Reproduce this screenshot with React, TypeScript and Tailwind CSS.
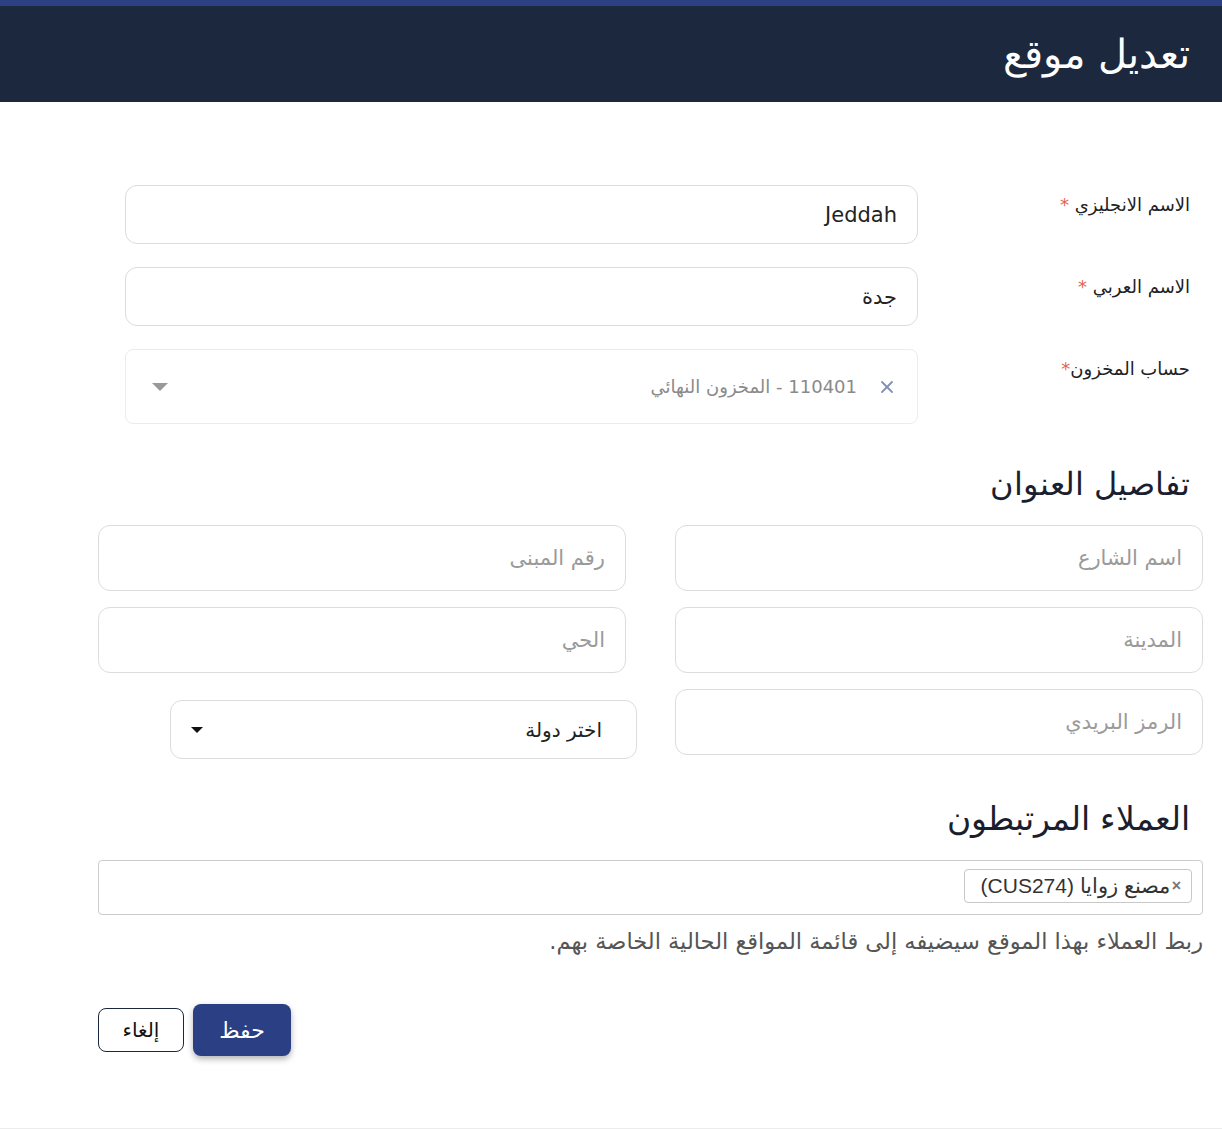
import { X } from "lucide-react";

const inputCls =
  "w-full h-full rounded-xl border border-[#dcdcdc] bg-white px-5 text-[21px] text-[#222] outline-none placeholder:text-[#9a9a9a]";

const Field = ({ label }: { label: string }) => (
  <div className="h-[66px]">
    <input className={inputCls} placeholder={label} />
  </div>
);

const EditLocation = () => {
  return (
    <div dir="rtl" className="min-h-[1129px] bg-white font-['DejaVu_Sans',sans-serif] text-[#222]">
      <div className="h-[6px] bg-[#2c4084]" />
      <header className="flex h-[96px] items-center bg-[#1b283d] pr-[32px]">
        <h1 className="text-[40px] font-extralight text-white">تعديل موقع</h1>
      </header>

      <main className="pl-[98px] pr-[19px] pt-[83px]">
        {/* main fields */}
        <div className="flex flex-col gap-[23px] pr-[13px]">
          <div className="flex">
            <label className="w-[272px] pt-[6px] text-[18px]">
              الاسم الانجليزي <span className="text-[#e4634f]">*</span>
            </label>
            <div className="h-[59px] w-[793px]">
              <input className={inputCls} defaultValue="Jeddah" />
            </div>
          </div>
          <div className="flex">
            <label className="w-[272px] pt-[6px] text-[18px]">
              الاسم العربي <span className="text-[#e4634f]">*</span>
            </label>
            <div className="h-[59px] w-[793px]">
              <input className={inputCls} defaultValue="جدة" />
            </div>
          </div>
          <div className="flex">
            <label className="w-[272px] pt-[6px] text-[18px]">
              حساب المخزون<span className="text-[#e4634f]">*</span>
            </label>
            <div className="flex h-[75px] w-[793px] items-center rounded-lg border border-[#ececec] bg-white pl-[26px] pr-[20px]">
              <X className="h-[20px] w-[20px] text-[#8590b4]" strokeWidth={2.2} />
              <span className="mr-[20px] flex-1 text-[18px] text-[#8a8a8a]">110401 - المخزون النهائي</span>
              <span className="h-0 w-0 border-x-[8px] border-t-[8px] border-x-transparent border-t-[#999]" />
            </div>
          </div>
        </div>

        {/* address */}
        <h2 className="mt-[36px] pr-[13px] text-[32px] font-light text-[#1b1e2e]">تفاصيل العنوان</h2>
        <div className="mt-[17px] grid grid-cols-2 gap-x-[49px]">
          <div className="flex flex-col gap-[16px]">
            <Field label="اسم الشارع" />
            <Field label="المدينة" />
            <Field label="الرمز البريدي" />
          </div>
          <div className="flex flex-col gap-[16px]">
            <Field label="رقم المبنى" />
            <Field label="الحي" />
            <div className="mt-[11px] ml-[-11px] mr-[-11px] pl-[83px]">
              <div className="flex h-[59px] items-center justify-between rounded-xl border border-[#dcdcdc] bg-white pl-[20px] pr-[34px]">
                <span className="text-[20px] text-[#222]">اختر دولة</span>
                <span className="h-0 w-0 border-x-[6px] border-t-[6px] border-x-transparent border-t-[#111]" />
              </div>
            </div>
          </div>
        </div>

        {/* customers */}
        <h2 className="mt-[35px] pr-[13px] text-[33px] font-light text-[#1b1e2e]">العملاء المرتبطون</h2>
        <div className="mt-[16px] flex h-[55px] items-start rounded border border-[#cccccc] bg-white pr-[10px] pt-[8px]">
          <span className="flex h-[34px] items-center gap-[2px] rounded border border-[#c8c8c8] bg-white pl-[16px] pr-[10px] font-['Liberation_Sans',sans-serif] text-[21px] text-[#333]">
            <span className="text-[16px] font-bold text-[#777]">×</span>
            مصنع زوايا (CUS274)
          </span>
        </div>
        <p className="mt-[10px] text-[22.5px] text-[#555]">ربط العملاء بهذا الموقع سيضيفه إلى قائمة المواقع الحالية الخاصة بهم.</p>

        <div dir="ltr" className="mt-[46px] flex items-center gap-[9px]">
          <button className="h-[44px] w-[86px] rounded-lg border border-[#1b283d] bg-white text-[20px] text-[#111]">إلغاء</button>
          <button className="h-[52px] w-[98px] rounded-lg bg-[#2b3f85] text-[22px] text-white shadow-[0_3px_6px_rgba(0,0,0,0.3)]">حفظ</button>
        </div>
      </main>
      <div className="mt-[72px] h-px bg-[#ececec]" />
    </div>
  );
};

export default function App() {
  return <EditLocation />;
}
